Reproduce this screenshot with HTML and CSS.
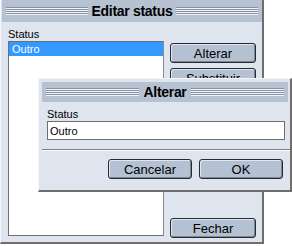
FILE: index.html
```html
<!DOCTYPE html>
<html lang="pt">
<head>
    <meta charset="UTF-8">
    <title>Editar status</title>
    <link rel="stylesheet" href="styles.css">
</head>
<body>
    <!-- janela principal -->
    <div class="window">
        <div class="titlebar">
            <span class="stripes"></span>
            <span class="title">Editar status</span>
            <span class="stripes"></span>
        </div>
        <div class="main-body">
            <div class="list-col">
                <div class="label">Status</div>
                <div class="listbox">
                    <div class="item selected">Outro</div>
                </div>
            </div>
            <div class="btn-col">
                <button class="btn">Alterar</button>
                <button class="btn">Substituir</button>
                <span class="spacer"></span>
                <button class="btn">Fechar</button>
            </div>
        </div>
    </div>

    <!-- dialogo Alterar -->
    <div class="dialog">
        <div class="titlebar">
            <span class="stripes"></span>
            <span class="title">Alterar</span>
            <span class="stripes"></span>
        </div>
        <div class="dialog-body">
            <div class="label">Status</div>
            <input class="field" type="text" value="Outro">
        </div>
        <div class="dialog-footer">
            <button class="btn wide">Cancelar</button>
            <button class="btn wide">OK</button>
        </div>
    </div>
</body>
</html>
```

FILE: styles.css
```css
body {
    margin: 0;
    background: #ffffff;
    font-family: "Liberation Sans", Arial, sans-serif;
    font-size: 11px;
    color: #000;
    width: 292px;
    height: 246px;
    position: relative;
    overflow: hidden;
}

/* janela principal */
.window {
    width: 260px;
    height: 242px;
    background: #dee5ef;
    border-left: 1px solid #f4f6fa;
    border-right: 2px solid #6e6e6e;
    border-bottom: 2px solid #6e6e6e;
    padding: 0 0 0 1px;
    display: flex;
    flex-direction: column;
}

.titlebar {
    height: 22px;
    background: #b6c2d2;
    display: flex;
    align-items: center;
    gap: 4px;
    padding: 0 4px;
}
.stripes {
    flex: 1;
    height: 8px;
    background: repeating-linear-gradient(to bottom, #8592a4 0, #8592a4 1px, #f2f4f8 1px, #f2f4f8 2px);
}
.title {
    font-weight: bold;
    font-size: 14px;
    letter-spacing: -0.3px;
}

.main-body {
    flex: 1;
    display: flex;
    padding: 5px 6px 6px 6px;
    gap: 6px;
}
.list-col {
    width: 156px;
    display: flex;
    flex-direction: column;
}
.label {
    height: 14px;
    line-height: 14px;
}
.listbox {
    flex: 1;
    background: #fff;
    border: 1px solid #6e6e6e;
    border-right-color: #8a8a8a;
}
.item {
    height: 14px;
    line-height: 14px;
    padding-left: 3px;
}
.item.selected {
    background: #3399ff;
    color: #fff;
}

.btn-col {
    width: 86px;
    display: flex;
    flex-direction: column;
    gap: 5px;
    padding-top: 16px;
    margin-bottom: -2px;
}
.spacer {
    flex: 1;
}
.btn {
    height: 20px;
    width: 86px;
    padding: 0;
    background: #b4c1d2;
    border: 1px solid #2a2a2a;
    border-radius: 3px;
    box-shadow: inset -1px -1px 0 #7c8898, inset 1px 1px 0 #dfe6ef;
    font-family: "Liberation Sans", Arial, sans-serif;
    font-size: 13px;
    color: #000;
}

/* dialogo sobreposto */
.dialog {
    position: absolute;
    left: 38px;
    top: 78px;
    width: 248px;
    height: 108px;
    background: #dee5ef;
    border-left: 1px solid #f4f6fa;
    border-top: 1px solid #f4f6fa;
    border-right: 2px solid #6e6e6e;
    border-bottom: 2px solid #6e6e6e;
    padding: 3px 0 0 3px;
    display: flex;
    flex-direction: column;
}
.dialog .titlebar {
    margin-right: 2px;
    height: 20px;
}
.dialog-body {
    padding: 5px 4px 0 5px;
    display: flex;
    flex-direction: column;
}
.field {
    height: 19px;
    box-sizing: border-box;
    width: 238px;
    border: 1px solid #6e6e6e;
    background: #fff;
    font-family: "Liberation Sans", Arial, sans-serif;
    font-size: 11px;
    padding: 0 2px;
    margin: 0;
}
.dialog-footer {
    margin-top: 9px;
    border-top: 1px solid #7c7c7c;
    box-shadow: inset 0 1px 0 #ffffff;
    display: flex;
    justify-content: flex-end;
    gap: 7px;
    padding: 9px 7px 0 0;
}
.btn.wide {
    width: 84px;
}
```
